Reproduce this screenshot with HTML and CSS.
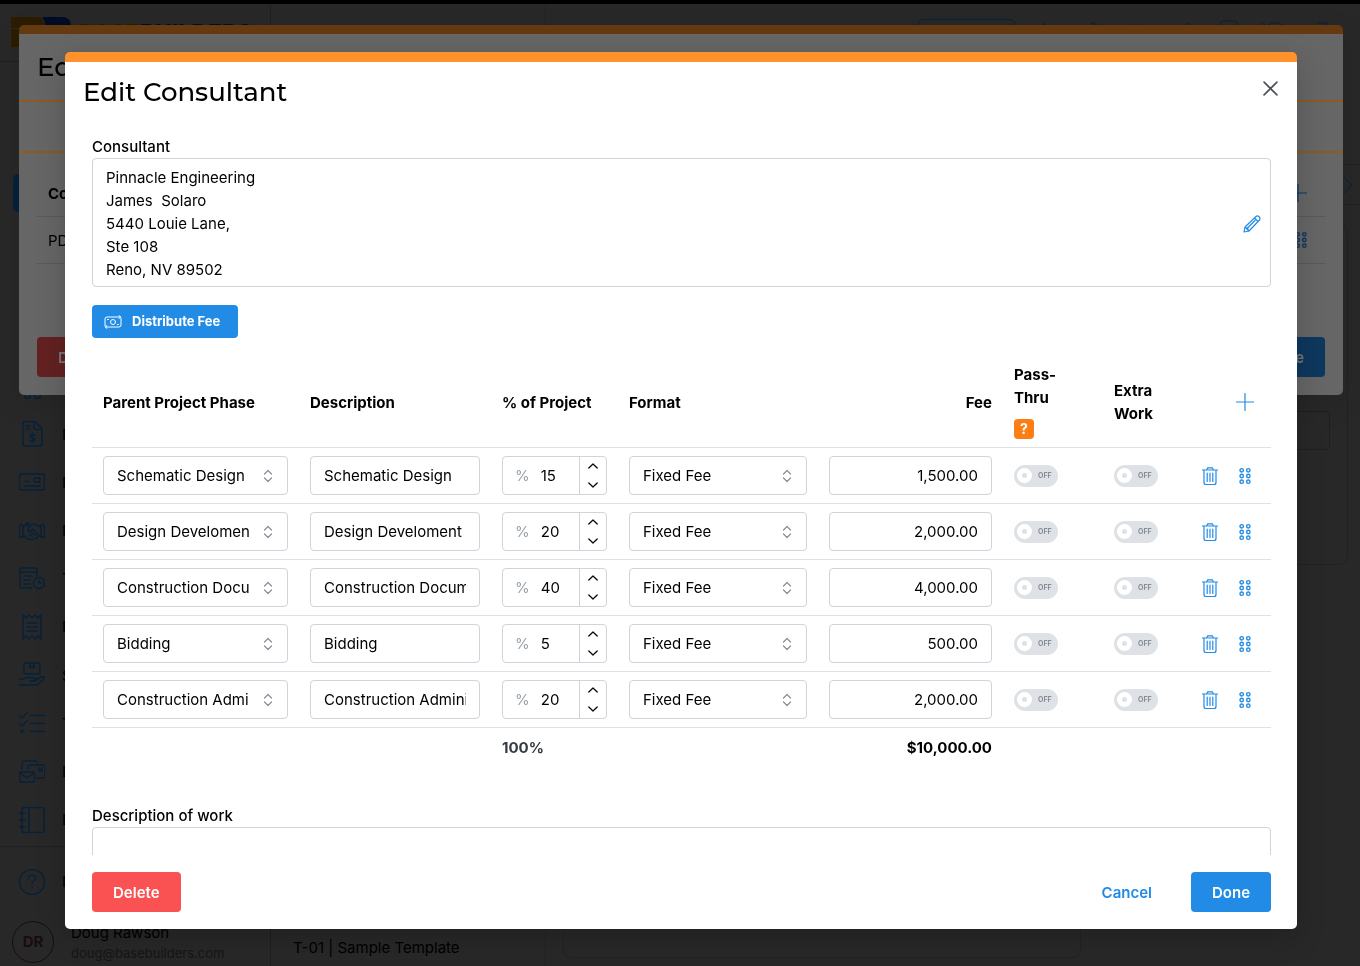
FILE: index.html
```html
<!DOCTYPE html>
<html lang="en">
<head>
  <meta charset="UTF-8">
  <meta name="viewport" content="width=device-width, initial-scale=1.0">
  <title>BaseBuilders - Edit Consultant</title>
  <link rel="stylesheet" href="styles.css">
</head>
<body>
  <!-- Icon sprite -->
  <svg class="sprite" aria-hidden="true">
    <symbol id="i-updown" viewBox="0 0 10 14"><path d="M1.500 5 5 1.500 8.500 5M1.500 9 5 12.500 8.500 9"/></symbol>
    <symbol id="i-up" viewBox="0 0 10 6"><path d="M.8 5 5 1l4.200 4"/></symbol>
    <symbol id="i-down" viewBox="0 0 10 6"><path d="M.8 1 5 5l4.200-4"/></symbol>
    <symbol id="i-plus" viewBox="0 0 18 18"><path d="M9 .5v17M.5 9h17"/></symbol>
    <symbol id="i-trash" viewBox="0 0 16 20"><path d="M.5 4h15M2 4v12.500a2 2 0 0 0 2 2h8a2 2 0 0 0 2-2V4M4.500 4l1.200-2.200h4.600L11.500 4M5.200 7v8.500M8 7v8.500M10.800 7v8.500"/></symbol>
    <symbol id="i-grip" viewBox="0 0 12 18"><circle cx="2.700" cy="3.300" r="1.700"/><circle cx="9.300" cy="3.300" r="1.700"/><circle cx="2.700" cy="9" r="1.700"/><circle cx="9.300" cy="9" r="1.700"/><circle cx="2.700" cy="14.700" r="1.700"/><circle cx="9.300" cy="14.700" r="1.700"/></symbol>
  </svg>

  <div class="app">
    <aside class="sidebar">
      <div class="brand">
        <svg class="brand-mark" viewBox="0 0 60 30"><path class="mark-orange" d="M0 0h26q7 0 7 8v3H0zM0 12h33v10q0 8-7 8H0z"/><path class="mark-blue" d="M31 0h20q9 0 9 9v12q0 9-9 9H34V9q0-6-3-9z"/></svg>
        <span class="brand-name"><span class="brand-base">BASE</span>BUILDERS</span>
      </div>
      <nav class="nav">
        <a href="#" class="nav-item active" aria-label="Home"></a>
        <a href="#" class="nav-item" aria-label="Clients"></a>
        <a href="#" class="nav-item" aria-label="Contacts"></a>
        <a href="#" class="nav-item" aria-label="Calendar"></a>
        <a href="#" class="nav-item" aria-label="Teams"><svg class="icon" viewBox="0 0 26 26"><path d="M6 14h5v11H6zM16 14h5v11h-5z"/></svg></a>
        <a href="#" class="nav-item"><svg class="icon" viewBox="0 0 26 26"><path d="M6 .5h10l7 7V23a2 2 0 0 1-2 2H6a2 2 0 0 1-2-2V2.500a2 2 0 0 1 2-2zM15 1v5.500a2 2 0 0 0 2 2h5.500M7 5h4M7 8h4M16 14.500c-1-1.500-5-1.500-5 .5s5 1.500 5 3.500-4 2-5.500.5M13.300 11.500v10.500"/></svg>Pay</a>
        <a href="#" class="nav-item"><svg class="icon" viewBox="0 0 26 26"><rect x=".5" y="5" width="25" height="16" rx="2"/><rect x="15" y="9" width="6" height="4" rx="1"/><path d="M5 12.500h5M5 17h16"/></svg>Pre</a>
        <a href="#" class="nav-item"><svg class="icon" viewBox="0 0 26 26"><path d="M.5 7h3.500v12H.5zM22 7h3.500v12H22zM4 9c2 0 3-2 6-2M4 17l5 4c2 1 3 1 4 0 2 1 3 0 4-1 1.500 0 2-1 2-2l3-1M22 9c-2 0-4-3-7-3s-6 4-6 6 3 2 5-1l5 6M6 6l4-1M10 16l3 2M12 14l4 3"/></svg>Pro</a>
        <a href="#" class="nav-item"><svg class="icon" viewBox="0 0 26 26"><path d="M13 22H3a2 2 0 0 1-2-2V4a2 2 0 0 1 2-2h13a2 2 0 0 1 2 2v6M1 6h17M5 10h8M5 14h6M5 18h6"/><circle cx="20" cy="17" r="5.500"/><path d="M20 14v3h3"/></svg>Time</a>
        <a href="#" class="nav-item"><svg class="icon" viewBox="0 0 26 26"><path d="M4 1l3 3 3-3 3 3 3-3 3 3 3-3v24l-3-3-3 3-3-3-3 3-3-3-3 3zM8 9h10M8 13h10M8 17h10"/></svg>Exp</a>
        <a href="#" class="nav-item"><svg class="icon" viewBox="0 0 26 26"><rect x="5" y="1" width="16" height="11" rx="2"/><path d="M11 1v5l2-1.500L15 6V1M.5 17h4c3-3 5-2 7-1h4c2 0 2 3 0 3h-5M16 18l6-3c3-1 4 1 2 3l-6 5H.5"/></svg>Sub</a>
        <a href="#" class="nav-item"><svg class="icon" viewBox="0 0 26 26"><path d="M.5 6l2.500 2 5-5M.5 14l2.500 2 5-5M11 5.500h15M11 13.500h15M11 21.500h15"/><circle cx="3" cy="21.500" r="1"/></svg>Task</a>
        <a href="#" class="nav-item"><svg class="icon" viewBox="0 0 26 26"><rect x=".5" y="13" width="15" height="10" rx="1"/><path d="M1 14l7 5 7-5M3 10V4a2 2 0 0 1 2-2h11a2 2 0 0 1 2 2M9 10V8a2 2 0 0 1 2-2h13a2 2 0 0 1 2 2v9a2 2 0 0 1-2 2h-6M20 9h3v3h-3z"/></svg>Doc</a>
        <a href="#" class="nav-item"><svg class="icon" viewBox="0 0 26 26"><rect x="3" y=".5" width="22" height="25" rx="2"/><path d="M10 .5v25M0 6h6M0 13h6M0 20h6"/></svg>Log</a>
      </nav>
      <div class="help">
        <a href="#" class="nav-item"><svg class="icon" viewBox="0 0 26 26"><circle cx="13" cy="13" r="12.500"/><path d="M9.500 10c0-5 7-5 7-1 0 3-3.500 3-3.500 6M13 18v1.500"/></svg>New</a>
      </div>
      <div class="user">
        <span class="avatar">DR</span>
        <span class="user-text"><span>Doug Rawson</span><span class="user-mail">doug@basebuilders.com</span></span>
      </div>
    </aside>

    <section class="list-pane">
      <div class="topbar"></div>
      <div class="list-item">T-01 | Sample Template</div>
    </section>

    <main class="content">
      <div class="topbar">
        <span class="timer"></span>
        <svg class="top-icons" viewBox="0 0 300 30"><path d="M10 14 14 4l4 10zM62 4v12l8-8zM106 4v14M98 14h16M150 12l8-8 8 8-8 8zM190 20V6q0-4 4-4h10q4 0 4 4v14M232 4l6 4M238 6q8-5 14 0M284 14l12-10M288 4h9v9"/></svg>
      </div>
      <div class="page-strip"><svg class="chevron" viewBox="0 0 10 20"><path d="M1 2l8 8-8 8"/></svg></div>
      <div class="page-card"><div class="page-field"></div></div>
      <div class="page-bottom"></div>
    </main>
  </div>

  <!-- Parent dialog, sits behind the consultant dialog -->
  <div class="overlay overlay-back">
    <section class="dialog-back">
      <h2 class="title">Edit</h2>
      <div class="back-tabs"></div>
      <div class="back-list">
        <div class="back-row back-head"><span>Co.</span><svg class="plus" viewBox="0 0 18 18"><use href="#i-plus"/></svg></div>
        <div class="back-row"><span>PD</span><svg class="grip" viewBox="0 0 12 18"><use href="#i-grip"/></svg></div>
      </div>
      <div class="back-footer">
        <button type="button" class="btn btn-delete">Delete</button>
        <button type="button" class="btn btn-primary">Done</button>
      </div>
    </section>
  </div>

  <div class="overlay overlay-front">
    <form class="dialog" role="dialog" aria-labelledby="dialog-title">
      <header class="dialog-header">
        <h1 class="title" id="dialog-title">Edit Consultant</h1>
        <button type="button" class="icon-btn close" aria-label="Close"><svg viewBox="0 0 14 14"><path d="M1 1l12 12M13 1 1 13"/></svg></button>
      </header>

      <div class="dialog-body">
        <div class="label">Consultant</div>
        <div class="address">
          <div class="address-text">Pinnacle Engineering
James  Solaro
5440 Louie Lane,
Ste 108
Reno, NV 89502</div>
          <button type="button" class="icon-btn edit" aria-label="Edit consultant"><svg viewBox="0 0 18 18"><path d="M1 17l1-5L13 1.500c2-1.500 5 1 3.500 3.500L6 16zM2 12l4 4M11.500 3l3.500 3.500M5 12.500l7-7M4 13l1 1"/></svg></button>
        </div>

        <button type="button" class="btn btn-primary btn-small">
          <svg viewBox="0 0 18 14"><path d="M1 11V4q0-2 2-2h13.500M15 .5 16.700 2 15 3.500M17 3v7q0 2-2 2H1.500M3 10.500 1.300 12 3 13.500M3.500 4.500h1M13.500 9.500h1"/><circle cx="9" cy="7" r="2.500"/></svg>
          Distribute Fee
        </button>

        <table class="phases">
          <colgroup>
            <col class="col-phase"><col class="col-desc"><col class="col-percent"><col class="col-format"><col class="col-fee"><col class="col-pass"><col class="col-extra"><col class="col-actions">
          </colgroup>
          <thead>
            <tr>
              <th>Parent Project Phase</th>
              <th>Description</th>
              <th>% of Project</th>
              <th>Format</th>
              <th class="num">Fee</th>
              <th>Pass-<br>Thru<button type="button" class="hint" aria-label="About pass-thru">?</button></th>
              <th>Extra<br>Work</th>
              <th><div class="actions"><button type="button" class="icon-btn plus" aria-label="Add phase"><svg viewBox="0 0 18 18"><use href="#i-plus"/></svg></button></div></th>
            </tr>
          </thead>
          <tbody>
            <tr>
              <td><div class="select"><select aria-label="Parent project phase"><option>Schematic Design</option></select><svg viewBox="0 0 10 14"><use href="#i-updown"/></svg></div></td>
              <td><input type="text" class="field" aria-label="Description" value="Schematic Design"></td>
              <td><div class="percent"><span>%</span><input type="text" aria-label="Percent of project" value="15"><div class="stepper"><button type="button" aria-label="Increase"><svg viewBox="0 0 10 6"><use href="#i-up"/></svg></button><button type="button" aria-label="Decrease"><svg viewBox="0 0 10 6"><use href="#i-down"/></svg></button></div></div></td>
              <td><div class="select"><select aria-label="Format"><option>Fixed Fee</option></select><svg viewBox="0 0 10 14"><use href="#i-updown"/></svg></div></td>
              <td><input type="text" class="field num" aria-label="Fee" value="1,500.00"></td>
              <td><label class="switch"><input type="checkbox" aria-label="Pass-thru"><span class="thumb"></span>OFF</label></td>
              <td><label class="switch"><input type="checkbox" aria-label="Extra work"><span class="thumb"></span>OFF</label></td>
              <td><div class="actions"><button type="button" class="icon-btn trash" aria-label="Delete phase"><svg viewBox="0 0 16 20"><use href="#i-trash"/></svg></button><button type="button" class="icon-btn grip" aria-label="Reorder phase"><svg viewBox="0 0 12 18"><use href="#i-grip"/></svg></button></div></td>
            </tr>
            <tr>
              <td><div class="select"><select aria-label="Parent project phase"><option>Design Develoment</option></select><svg viewBox="0 0 10 14"><use href="#i-updown"/></svg></div></td>
              <td><input type="text" class="field" aria-label="Description" value="Design Develoment"></td>
              <td><div class="percent"><span>%</span><input type="text" aria-label="Percent of project" value="20"><div class="stepper"><button type="button" aria-label="Increase"><svg viewBox="0 0 10 6"><use href="#i-up"/></svg></button><button type="button" aria-label="Decrease"><svg viewBox="0 0 10 6"><use href="#i-down"/></svg></button></div></div></td>
              <td><div class="select"><select aria-label="Format"><option>Fixed Fee</option></select><svg viewBox="0 0 10 14"><use href="#i-updown"/></svg></div></td>
              <td><input type="text" class="field num" aria-label="Fee" value="2,000.00"></td>
              <td><label class="switch"><input type="checkbox" aria-label="Pass-thru"><span class="thumb"></span>OFF</label></td>
              <td><label class="switch"><input type="checkbox" aria-label="Extra work"><span class="thumb"></span>OFF</label></td>
              <td><div class="actions"><button type="button" class="icon-btn trash" aria-label="Delete phase"><svg viewBox="0 0 16 20"><use href="#i-trash"/></svg></button><button type="button" class="icon-btn grip" aria-label="Reorder phase"><svg viewBox="0 0 12 18"><use href="#i-grip"/></svg></button></div></td>
            </tr>
            <tr>
              <td><div class="select"><select aria-label="Parent project phase"><option>Construction Documents</option></select><svg viewBox="0 0 10 14"><use href="#i-updown"/></svg></div></td>
              <td><input type="text" class="field" aria-label="Description" value="Construction Documents"></td>
              <td><div class="percent"><span>%</span><input type="text" aria-label="Percent of project" value="40"><div class="stepper"><button type="button" aria-label="Increase"><svg viewBox="0 0 10 6"><use href="#i-up"/></svg></button><button type="button" aria-label="Decrease"><svg viewBox="0 0 10 6"><use href="#i-down"/></svg></button></div></div></td>
              <td><div class="select"><select aria-label="Format"><option>Fixed Fee</option></select><svg viewBox="0 0 10 14"><use href="#i-updown"/></svg></div></td>
              <td><input type="text" class="field num" aria-label="Fee" value="4,000.00"></td>
              <td><label class="switch"><input type="checkbox" aria-label="Pass-thru"><span class="thumb"></span>OFF</label></td>
              <td><label class="switch"><input type="checkbox" aria-label="Extra work"><span class="thumb"></span>OFF</label></td>
              <td><div class="actions"><button type="button" class="icon-btn trash" aria-label="Delete phase"><svg viewBox="0 0 16 20"><use href="#i-trash"/></svg></button><button type="button" class="icon-btn grip" aria-label="Reorder phase"><svg viewBox="0 0 12 18"><use href="#i-grip"/></svg></button></div></td>
            </tr>
            <tr>
              <td><div class="select"><select aria-label="Parent project phase"><option>Bidding</option></select><svg viewBox="0 0 10 14"><use href="#i-updown"/></svg></div></td>
              <td><input type="text" class="field" aria-label="Description" value="Bidding"></td>
              <td><div class="percent"><span>%</span><input type="text" aria-label="Percent of project" value="5"><div class="stepper"><button type="button" aria-label="Increase"><svg viewBox="0 0 10 6"><use href="#i-up"/></svg></button><button type="button" aria-label="Decrease"><svg viewBox="0 0 10 6"><use href="#i-down"/></svg></button></div></div></td>
              <td><div class="select"><select aria-label="Format"><option>Fixed Fee</option></select><svg viewBox="0 0 10 14"><use href="#i-updown"/></svg></div></td>
              <td><input type="text" class="field num" aria-label="Fee" value="500.00"></td>
              <td><label class="switch"><input type="checkbox" aria-label="Pass-thru"><span class="thumb"></span>OFF</label></td>
              <td><label class="switch"><input type="checkbox" aria-label="Extra work"><span class="thumb"></span>OFF</label></td>
              <td><div class="actions"><button type="button" class="icon-btn trash" aria-label="Delete phase"><svg viewBox="0 0 16 20"><use href="#i-trash"/></svg></button><button type="button" class="icon-btn grip" aria-label="Reorder phase"><svg viewBox="0 0 12 18"><use href="#i-grip"/></svg></button></div></td>
            </tr>
            <tr>
              <td><div class="select"><select aria-label="Parent project phase"><option>Construction Administration</option></select><svg viewBox="0 0 10 14"><use href="#i-updown"/></svg></div></td>
              <td><input type="text" class="field" aria-label="Description" value="Construction Administration"></td>
              <td><div class="percent"><span>%</span><input type="text" aria-label="Percent of project" value="20"><div class="stepper"><button type="button" aria-label="Increase"><svg viewBox="0 0 10 6"><use href="#i-up"/></svg></button><button type="button" aria-label="Decrease"><svg viewBox="0 0 10 6"><use href="#i-down"/></svg></button></div></div></td>
              <td><div class="select"><select aria-label="Format"><option>Fixed Fee</option></select><svg viewBox="0 0 10 14"><use href="#i-updown"/></svg></div></td>
              <td><input type="text" class="field num" aria-label="Fee" value="2,000.00"></td>
              <td><label class="switch"><input type="checkbox" aria-label="Pass-thru"><span class="thumb"></span>OFF</label></td>
              <td><label class="switch"><input type="checkbox" aria-label="Extra work"><span class="thumb"></span>OFF</label></td>
              <td><div class="actions"><button type="button" class="icon-btn trash" aria-label="Delete phase"><svg viewBox="0 0 16 20"><use href="#i-trash"/></svg></button><button type="button" class="icon-btn grip" aria-label="Reorder phase"><svg viewBox="0 0 12 18"><use href="#i-grip"/></svg></button></div></td>
            </tr>
          </tbody>
          <tfoot>
            <tr>
              <td></td><td></td>
              <td class="total-percent">100%</td>
              <td></td>
              <td class="num">$10,000.00</td>
              <td></td><td></td><td></td>
            </tr>
          </tfoot>
        </table>

        <label class="label" for="work">Description of work</label>
        <textarea class="work" id="work"></textarea>
      </div>

      <footer class="dialog-footer">
        <button type="button" class="btn btn-delete">Delete</button>
        <div class="footer-right">
          <button type="button" class="btn btn-link">Cancel</button>
          <button type="submit" class="btn btn-primary">Done</button>
        </div>
      </footer>
    </form>
  </div>
</body>
</html>
```
FILE: styles.css
```css
* {
  box-sizing: border-box;
}

html, body {
  height: 100%;
  margin: 0;
  overflow: hidden;
}

body {
  font-family: Inter, "Liberation Sans", sans-serif;
  font-size: 15px;
  line-height: 23px;
  color: #000;
  background: #282828;
}

button, input, select, textarea {
  font: inherit;
  color: inherit;
}

button {
  padding: 0;
  border: none;
  background: none;
  cursor: pointer;
}

svg {
  fill: none;
  stroke: currentColor;
  stroke-linecap: round;
  stroke-linejoin: round;
}

.sprite {
  position: absolute;
  width: 0;
  height: 0;
}

.title {
  margin: 0;
  font-family: Montserrat, Inter, sans-serif;
  font-size: 26px;
  font-weight: 500;
  line-height: 36px;
}

/* Page behind the dialogs */
.app {
  display: flex;
  height: 100%;
  border-top: 4px solid #000;
}

.sidebar {
  display: flex;
  flex-direction: column;
  width: 271px;
  border-right: 1px solid #1f1f1f;
}

.brand {
  display: flex;
  gap: 7px;
  height: 58px;
  padding: 13px 0 0 11px;
  border-bottom: 1px solid #1f1f1f;
}

.brand-mark {
  width: 60px;
  height: 30px;
  stroke: none;
}

.mark-orange {
  fill: #2c1c00;
}

.mark-blue {
  fill: #000d26;
}

.brand-name {
  font-size: 23px;
  font-weight: 800;
  line-height: 32px;
  color: #000d26;
}

.brand-base {
  color: #2c1c00;
}

.nav {
  display: flex;
  flex: 1;
  flex-direction: column;
  padding: 107px 13px 2px;
}

.nav-item {
  display: flex;
  flex: 1;
  align-items: center;
  gap: 17px;
  padding-left: 6px;
  color: #000;
  text-decoration: none;
}

.nav-item .icon {
  width: 26px;
  height: 26px;
  stroke-width: 1.4;
  color: #06213a;
}

.nav-item.active {
  flex: 0 0 38px;
  margin: 5px 0;
  border-radius: 5px;
  background: #06213a;
}

.help {
  display: flex;
  height: 70px;
  padding: 0 13px;
  border-top: 1px solid #1f1f1f;
}

.user {
  display: flex;
  gap: 17px;
  height: 50px;
  padding: 5px 12px 0;
}

.avatar {
  flex: none;
  width: 42px;
  height: 42px;
  border: 1px solid #180d0d;
  border-radius: 50%;
  font-weight: 700;
  line-height: 40px;
  text-align: center;
  color: #180d0d;
}

.user-text {
  display: flex;
  flex-direction: column;
  padding-top: 2px;
  line-height: 20px;
}

.user-mail {
  font-size: 13px;
  color: #151515;
}

.list-pane {
  display: flex;
  flex-direction: column;
  justify-content: space-between;
  width: 275px;
  border-right: 1px solid #232323;
}

.topbar {
  display: flex;
  justify-content: flex-end;
  height: 58px;
  padding: 15px 30px 0;
}

.timer {
  width: 97px;
  height: 32px;
  border: 1px solid #06213a;
  border-radius: 5px;
}

.top-icons {
  width: 300px;
  height: 30px;
  margin-left: 15px;
  color: #06213a;
}

.list-item {
  padding: 0 22px 7px;
}

.content {
  display: flex;
  flex: 1;
  flex-direction: column;
}

.page-strip {
  height: 41px;
  margin: 102px 0 20px;
  padding: 10px 7px 0;
  border: 1px solid #222;
  border-width: 1px 0;
  text-align: right;
}

.chevron {
  width: 10px;
  height: 20px;
  color: #06213a;
}

.page-card {
  height: 340px;
  margin: 0 12px 0 17px;
  padding: 185px 17px 0;
  border: 1px solid #222;
  border-radius: 8px;
}

.page-field {
  height: 39px;
  border: 1px solid #1f1f1f;
  border-radius: 5px;
}

.page-bottom {
  flex: 1;
  width: 518px;
  margin: 40px 0 8px 17px;
  border: 1px solid #222;
  border-radius: 8px;
}

/* Overlays */
.overlay {
  position: fixed;
  inset: 0;
}

.overlay-back {
  padding: 25px 17px 0 19px;
}

.overlay-front {
  display: flex;
  padding: 52px 63px 37px 65px;
}

/* Parent dialog */
.dialog-back {
  height: 370px;
  border-top: 9px solid #663a11;
  border-radius: 5px;
  background: #666;
  box-shadow: 0 8px 30px rgba(0, 0, 0, 0.1);
}

.dialog-back .title {
  padding: 15px 18px;
}

.back-tabs {
  height: 53px;
  border: 2px solid #8f5a1c;
  border-width: 2px 0;
}

.back-list {
  padding: 17px 18px 0;
}

.back-row {
  display: flex;
  align-items: center;
  justify-content: space-between;
  height: 47px;
  padding: 0 18px 0 11px;
  border-bottom: 1px solid #595959;
}

.back-row svg {
  color: #0e3860;
}

.back-head {
  font-weight: 700;
}

.back-footer {
  display: flex;
  justify-content: space-between;
  padding: 73px 18px 0;
}

.dialog-back .btn {
  color: #777;
}

.dialog-back .btn-delete {
  background: #642121;
}

.dialog-back .btn-primary {
  background: #0e385e;
}

/* Consultant dialog */
.dialog {
  display: flex;
  flex: 1;
  flex-direction: column;
  min-width: 0;
  border-top: 10px solid #ff922b;
  border-radius: 5px;
  background: #fff;
  box-shadow: 0 8px 30px rgba(0, 0, 0, 0.2);
}

.dialog-header {
  display: flex;
  align-items: flex-start;
  justify-content: space-between;
  padding: 12px 19px 25px 18px;
}

.dialog-body {
  flex: 1;
  min-height: 0;
  padding: 0 26px 0 27px;
  overflow: hidden;
}

.label {
  display: block;
  font-weight: 500;
}

.icon-btn {
  display: flex;
  color: #228be6;
}

.close {
  margin-top: 7px;
  color: #495057;
}

.close svg {
  width: 15px;
  height: 15px;
  stroke-width: 1.5;
}

.address {
  display: flex;
  align-items: center;
  justify-content: space-between;
  padding: 7px 9px 5px 13px;
  border: 1px solid #ced4da;
  border-radius: 4px;
}

.address-text {
  white-space: pre-wrap;
}

.edit svg {
  width: 18px;
  height: 18px;
  stroke-width: 1.2;
}

.btn {
  height: 40px;
  padding: 0 21px;
  border-radius: 4px;
  font-weight: 600;
  color: #fff;
}

.btn-primary {
  background: #228be6;
}

.btn-delete {
  background: #fa5252;
}

.btn-link {
  color: #228be6;
}

.btn-small {
  display: flex;
  align-items: center;
  gap: 10px;
  height: 33px;
  margin-top: 18px;
  padding: 0 18px 0 12px;
  font-size: 13px;
  font-weight: 700;
}

.btn-small svg {
  width: 18px;
  height: 14px;
}

/* Phase table */
.phases {
  width: 100%;
  margin: 19px 0 37px;
  border-collapse: collapse;
  table-layout: fixed;
}

.col-phase { width: 207px; }
.col-desc { width: 192px; }
.col-percent { width: 127px; }
.col-format { width: 200px; }
.col-fee { width: 185px; }
.col-pass { width: 100px; }
.col-extra { width: 85px; }
.col-actions { width: 83px; }

.phases th,
.phases td {
  padding: 8px 11px;
  text-align: left;
  vertical-align: middle;
}

.phases th {
  padding: 6px 11px;
  font-weight: 700;
}

.phases tr {
  border-bottom: 1px solid #dee2e6;
}

.phases tfoot tr {
  border-bottom: none;
  font-weight: 700;
}

.total-percent {
  color: #343a40;
}

.phases .num {
  text-align: right;
}

.hint {
  display: block;
  width: 20px;
  height: 20px;
  margin: 10px 0 2px;
  border-radius: 4px;
  background: #fd7e14;
  font-size: 14px;
  font-weight: 700;
  line-height: 20px;
  color: #fff;
}

.field,
.select select,
.percent {
  width: 100%;
  height: 39px;
  border: 1px solid #ced4da;
  border-radius: 4px;
  background: #fff;
}

.field {
  display: block;
  padding: 0 13px;
}

.select {
  display: grid;
  align-items: center;
}

.select select,
.select svg {
  grid-area: 1 / 1;
}

.select select {
  padding: 0 38px 0 13px;
  appearance: none;
  text-overflow: clip;
}

.select svg {
  justify-self: end;
  width: 10px;
  height: 14px;
  margin-right: 15px;
  stroke-width: 1.2;
  color: #868e96;
  pointer-events: none;
}

.percent {
  display: flex;
  align-items: center;
  padding-left: 12px;
}

.percent span {
  color: #9aa2aa;
}

.percent input {
  flex: 1;
  min-width: 0;
  margin-left: 11px;
  padding: 0;
  border: none;
}

.stepper {
  display: flex;
  flex-direction: column;
  width: 27px;
  height: 100%;
  border-left: 1px solid #ced4da;
}

.stepper button {
  display: flex;
  flex: 1;
  align-items: center;
  justify-content: center;
}

.stepper svg {
  width: 10px;
  height: 6px;
  stroke-width: 1.2;
}

.switch {
  display: flex;
  align-items: center;
  gap: 6px;
  width: 44px;
  height: 22px;
  padding-left: 3px;
  border-radius: 11px;
  background: #dee2e6;
  font-size: 7px;
  font-weight: 700;
  color: #868e96;
}

.switch input {
  position: absolute;
  margin: 0;
  opacity: 0;
}

.thumb {
  width: 15px;
  height: 15px;
  border: 5px solid #fff;
  border-radius: 50%;
  background: #dee2e6;
}

.actions {
  display: flex;
  align-items: center;
  justify-content: flex-end;
  gap: 21px;
  padding-right: 9px;
}

.trash svg {
  width: 16px;
  height: 20px;
  stroke-width: 1.2;
}

.grip svg,
svg.grip {
  width: 12px;
  height: 18px;
  stroke-width: 1.4;
}

.plus svg,
svg.plus {
  width: 18px;
  height: 18px;
  stroke-width: 1.2;
}

th .actions {
  padding-right: 6px;
}

.work {
  display: block;
  width: 100%;
  height: 100px;
  border: 1px solid #ced4da;
  border-radius: 4px;
  resize: none;
}

.dialog-footer {
  display: flex;
  justify-content: space-between;
  padding: 17px 26px 17px 27px;
}

.footer-right {
  display: flex;
  gap: 18px;
}
```
